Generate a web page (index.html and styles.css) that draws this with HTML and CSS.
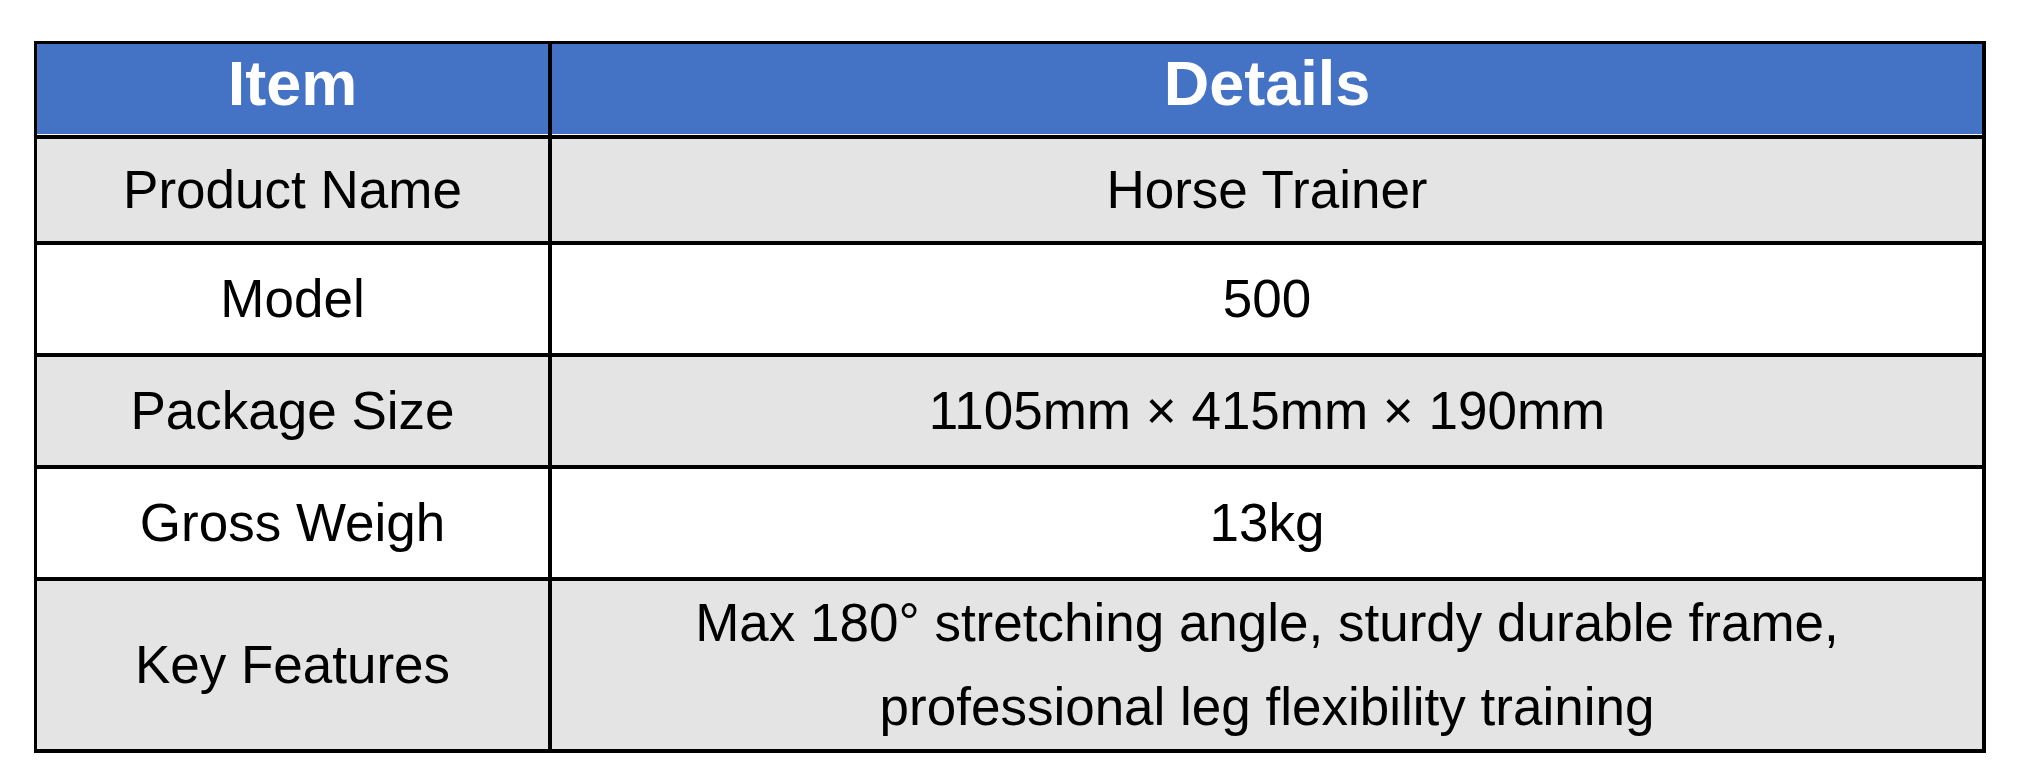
FILE: index.html
```html
<!DOCTYPE html>
<html lang="en">
<head>
<meta charset="utf-8">
<title>Horse Trainer Specifications</title>
<link rel="stylesheet" href="styles.css">
</head>
<body>
<table class="spec">
  <colgroup>
    <col class="col-item">
    <col class="col-details">
  </colgroup>
  <thead>
    <tr class="head-row">
      <th>Item</th>
      <th class="last-col">Details</th>
    </tr>
  </thead>
  <tbody>
    <tr class="row row-first shade">
      <td>Product Name</td>
      <td class="last-col">Horse Trainer</td>
    </tr>
    <tr class="row">
      <td>Model</td>
      <td class="last-col">500</td>
    </tr>
    <tr class="row shade">
      <td>Package Size</td>
      <td class="last-col">1105mm × 415mm × 190mm</td>
    </tr>
    <tr class="row">
      <td>Gross Weigh</td>
      <td class="last-col">13kg</td>
    </tr>
    <tr class="row row-last shade">
      <td>Key Features</td>
      <td class="last-col">Max 180° stretching angle, sturdy durable frame,<br>professional leg flexibility training</td>
    </tr>
  </tbody>
</table>
</body>
</html>
```

FILE: styles.css
```css
html, body {
  margin: 0;
  padding: 0;
  background: #ffffff;
}

body {
  font-family: "Liberation Sans", Arial, sans-serif;
  color: #000000;
}

.spec {
  margin: 41px 0 0 34px;
  width: 1952px;
  table-layout: fixed;
  border-collapse: separate;
  border-spacing: 0;
  border-top: 3px solid #000;
  border-left: 3px solid #000;
  border-right: 4px solid #000;
  border-bottom: 4px solid #000;
}

.col-item {
  width: 515px;
}

.col-details {
  width: 1430px;
}

.spec th,
.spec td {
  box-sizing: border-box;
  padding: 0;
  text-align: center;
  vertical-align: middle;
  border-right: 4px solid #000;
  border-bottom: 4px solid #000;
}

.spec .last-col {
  border-right: none;
}

.head-row th {
  height: 95px;
  padding-bottom: 14px;
  background: #4472c4;
  color: #ffffff;
  font-weight: bold;
  font-size: 63px;
  line-height: normal;
  box-shadow: inset 0 -1px 0 #ffffff;
}

.row td {
  height: 112px;
  font-size: 53px;
  line-height: 84px;
  background: #ffffff;
}

.row.shade td {
  background: #e4e4e4;
}

.row-first td {
  height: 106px;
}

.row-last td {
  height: 167px;
  border-bottom: none;
}
```
